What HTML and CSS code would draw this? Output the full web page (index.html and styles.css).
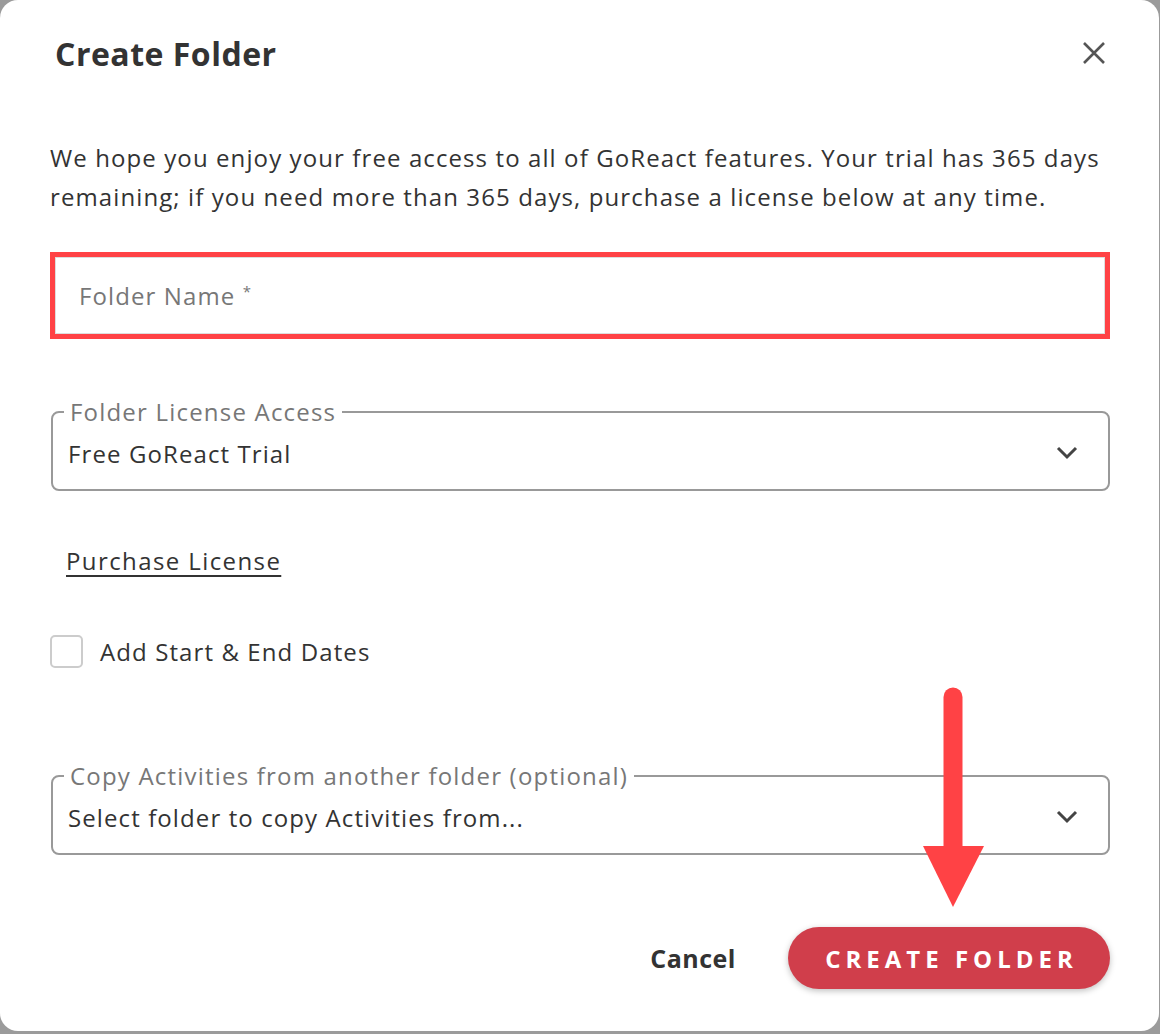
FILE: index.html
```html
<!DOCTYPE html>
<html lang="en">
<head>
    <meta charset="UTF-8">
    <meta name="viewport" content="width=device-width, initial-scale=1.0">
    <title>Create Folder</title>
    <link rel="stylesheet" href="styles.css">
</head>
<body>
    <div class="dialog">
        <div class="dialog-header">
            <h1>Create Folder</h1>
            <button class="close-btn" aria-label="Close">
                <svg width="22" height="22" viewBox="0 0 22 22">
                    <path d="M1 1 L21 21 M21 1 L1 21" stroke="#555" stroke-width="2.6" fill="none"/>
                </svg>
            </button>
        </div>

        <p class="intro">We hope you enjoy your free access to all of GoReact features. Your trial has 365 days remaining; if you need more than 365 days, purchase a license below at any time.</p>

        <div class="name-field">
            <span class="placeholder">Folder Name <sup>*</sup></span>
        </div>

        <fieldset class="select-field license-field">
            <legend>Folder License Access</legend>
            <div class="select-row">
                <span>Free GoReact Trial</span>
                <svg class="chevron" width="22" height="14" viewBox="0 0 22 14">
                    <path d="M2 2 L11 11 L20 2" stroke="#444" stroke-width="3" fill="none"/>
                </svg>
            </div>
        </fieldset>

        <a class="purchase-link" href="#">Purchase License</a>

        <label class="check-row">
            <span class="checkbox"></span>
            <span>Add Start &amp; End Dates</span>
        </label>

        <fieldset class="select-field copy-field">
            <legend>Copy Activities from another folder (optional)</legend>
            <div class="select-row">
                <span>Select folder to copy Activities from...</span>
                <svg class="chevron" width="22" height="14" viewBox="0 0 22 14">
                    <path d="M2 2 L11 11 L20 2" stroke="#444" stroke-width="3" fill="none"/>
                </svg>
            </div>
        </fieldset>

        <div class="dialog-footer">
            <button class="cancel-btn">Cancel</button>
            <button class="create-btn">CREATE FOLDER</button>
        </div>

        <!-- pointer drawn over the footer -->
        <svg class="pointer" width="70" height="232" viewBox="0 0 70 232">
            <line x1="33" y1="17" x2="33" y2="170" stroke="#ff4245" stroke-width="19" stroke-linecap="round"/>
            <polygon points="3,166 64,166 33,227" fill="#ff4245"/>
        </svg>
    </div>
</body>
</html>
```

FILE: styles.css
```css
body {
    margin: 0;
    background: #9b9b9b;
    font-family: "Open Sans", "Noto Sans", sans-serif;
    color: #333;
    letter-spacing: 1.1px;
}
.dialog {
    position: relative;
    width: 1159px;
    height: 1031px;
    box-sizing: border-box;
    padding: 0 49px 0 50px;
    background: white;
    border-radius: 18px;
}
.dialog-header {
    display: flex;
    justify-content: space-between;
    align-items: center;
    height: 106px;
}
.dialog-header h1 {
    margin: 0 0 0 5px;
    font-size: 32px;
    font-weight: 700;
    letter-spacing: 0.5px;
    color: #333;
}
.close-btn {
    background: none;
    border: none;
    padding: 0;
    margin-right: 5px;
    width: 22px;
    height: 22px;
    cursor: pointer;
}
.intro {
    margin: 32px 0 0;
    font-size: 24px;
    line-height: 39px;
}
.name-field {
    margin: 41px 5px 0 5px;
    height: 77px;
    box-sizing: border-box;
    border: 1px solid #ddd;
    outline: 5px solid #ff4245;
    display: flex;
    align-items: center;
    padding-left: 23px;
}
.placeholder {
    font-size: 24px;
    color: #777;
}
.placeholder sup {
    font-size: 15px;
    vertical-align: 8px;
}
.select-field {
    margin: 0 0 0 1px;
    padding: 0 15px 0 11px;
    border: 2px solid #999;
    border-radius: 8px;
    min-width: 0;
}
.select-field legend {
    padding: 0 6px;
    font-size: 24px;
    line-height: 26px;
    letter-spacing: 1.2px;
    color: #777;
}
.license-field {
    margin-top: 65px;
}
.copy-field {
    margin-top: 95px;
}
.select-row {
    display: flex;
    justify-content: space-between;
    align-items: center;
    height: 56px;
    padding: 0 0 8px 4px;
    font-size: 24px;
}
.chevron {
    margin-right: 15px;
}
.purchase-link {
    display: inline-block;
    margin: 55px 0 0 16px;
    font-size: 24px;
    line-height: 30px;
    letter-spacing: 1.4px;
    color: #333;
    text-decoration: underline;
    text-decoration-thickness: 2px;
    text-underline-offset: 5px;
}
.check-row {
    display: flex;
    align-items: center;
    gap: 17px;
    margin-top: 59px;
    font-size: 24px;
}
.checkbox {
    width: 33px;
    height: 33px;
    box-sizing: border-box;
    border: 2px solid #ccc;
    border-radius: 5px;
}
.dialog-footer {
    display: flex;
    justify-content: flex-end;
    align-items: center;
    gap: 52px;
    margin-top: 72px;
}
.cancel-btn {
    background: none;
    border: none;
    padding: 0;
    font-family: inherit;
    font-size: 25px;
    font-weight: 700;
    letter-spacing: 0.5px;
    color: #333;
    cursor: pointer;
}
.create-btn {
    width: 322px;
    height: 62px;
    padding: 0 0 0 5px;
    border: none;
    border-radius: 31px;
    background: #d03e4b;
    color: white;
    font-family: inherit;
    font-size: 24px;
    font-weight: 700;
    letter-spacing: 5px;
    box-shadow: 0 2px 6px rgba(0,0,0,0.25);
    cursor: pointer;
}
.pointer {
    position: absolute;
    left: 920px;
    top: 680px;
}
```
